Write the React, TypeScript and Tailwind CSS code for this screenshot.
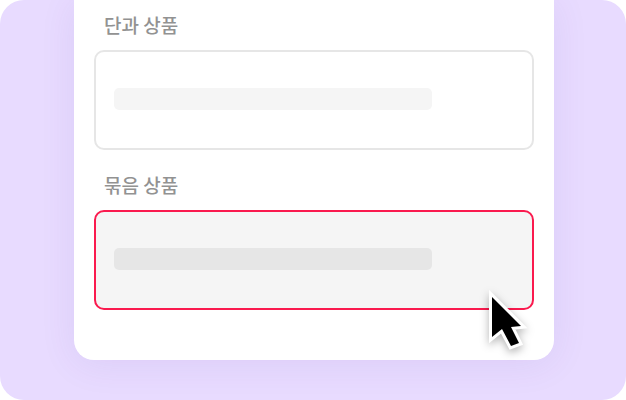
const font = { fontFamily: '"Noto Sans CJK KR", "Liberation Sans", sans-serif' };

function ProductGroup({
  label,
  active,
}: {
  label: string;
  active?: boolean;
}) {
  return (
    <section className="flex flex-col">
      <h3 className="h-[50px] pl-[10px] pt-[11px] text-[19px] leading-[28px] font-medium text-[#929292]">
        {label}
      </h3>
      <div
        className={
          active
            ? "flex h-[100px] items-center rounded-[10px] border-2 border-[#fa1a4e] bg-[#f5f5f5] px-[18px] pb-[2px]"
            : "flex h-[100px] items-center rounded-[10px] border-2 border-[#e6e6e6] bg-white px-[18px] pb-[2px]"
        }
      >
        <div
          className={
            active
              ? "h-[22px] w-[318px] rounded-[5px] bg-[#e6e6e6]"
              : "h-[22px] w-[318px] rounded-[5px] bg-[#f5f5f5]"
          }
        />
      </div>
    </section>
  );
}

function Cursor() {
  return (
    <svg
      className="absolute left-[414px] top-[290px] drop-shadow-[0_3px_4px_rgba(0,0,0,0.3)]"
      width="42"
      height="62"
      viewBox="0 0 42 62"
      fill="none"
    >
      <path
        d="M4 7 L4 47 L14 39 L23 56 L31 53 L23 37 L33 36 Z"
        fill="#000"
        stroke="#fff"
        strokeWidth="6"
        strokeLinejoin="miter"
        paintOrder="stroke"
      />
    </svg>
  );
}

export default function App() {
  return (
    <div className="h-[400px] w-[626px] overflow-hidden bg-white" style={font}>
      <div className="flex h-full items-end justify-center rounded-[24px] bg-[#e8dbff] pb-[40px] pl-[2px]">
        <div className="relative w-[480px] rounded-b-[20px] bg-white px-[20px] pb-[50px] shadow-[0_4px_36px_rgba(90,50,170,0.09)]">
          <ProductGroup label="단과 상품" />
          <div className="h-[10px]" />
          <ProductGroup label="묶음 상품" active />
          <Cursor />
        </div>
      </div>
    </div>
  );
}
